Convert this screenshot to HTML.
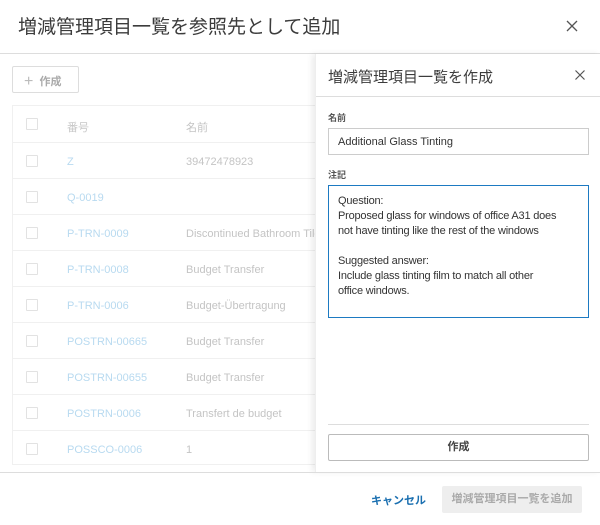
<!DOCTYPE html>
<html><head><meta charset="utf-8"><style>
*{box-sizing:border-box;margin:0;padding:0}
body{width:600px;height:525px;background:#fff;font-family:"Liberation Sans","Noto Sans CJK JP",sans-serif;position:relative;overflow:hidden;color:#333}
.abs{position:absolute}
.hdr{left:18px;top:12px;font-size:19px;color:#3c3c3c}
.row{position:absolute;left:12px;width:303px;height:36px;border-top:1px solid #f0f0f0}
.cb{position:absolute;left:14px;top:12px;width:12px;height:12px;border:1px solid #e2e2e2;border-radius:1px}
.num{position:absolute;left:55px;top:13px;font-size:11px;color:#b8daf0}
.nm{position:absolute;left:174px;top:13px;font-size:11px;color:#c4c4c4;white-space:nowrap}
</style></head><body>
<div class="abs hdr">増減管理項目一覧を参照先として追加</div>
<svg class="abs" style="left:566px;top:20px" width="12" height="12" viewBox="0 0 12 12"><path d="M1 1L11 11M11 1L1 11" stroke="#555" stroke-width="1.3"/></svg>
<div class="abs" style="left:0;top:53px;width:600px;height:1px;background:#ddd"></div>
<div class="abs" style="left:12px;top:66px;width:67px;height:27px;border:1px solid #ddd;border-radius:2px;font-size:11px;color:#aaa;font-weight:bold;padding:5px 0 0 11px"><span style="font-weight:normal;font-size:16px;color:#bbb;position:relative;top:1px">+</span>&nbsp; 作成</div>
<div class="abs" style="left:12px;top:105px;width:310px;height:360px;border:1px solid #f0f0f0"></div>
<div class="row" style="top:106px;border:none"><div class="cb"></div><div class="num" style="color:#c8c8c8;top:13px">番号</div><div class="nm" style="top:13px">名前</div></div>
<div class="row" style="top:142px"><div class="cb"></div><div class="num">Z</div><div class="nm">39472478923</div></div>
<div class="row" style="top:178px"><div class="cb"></div><div class="num">Q-0019</div></div>
<div class="row" style="top:214px"><div class="cb"></div><div class="num">P-TRN-0009</div><div class="nm">Discontinued Bathroom Tile</div></div>
<div class="row" style="top:250px"><div class="cb"></div><div class="num">P-TRN-0008</div><div class="nm">Budget Transfer</div></div>
<div class="row" style="top:286px"><div class="cb"></div><div class="num">P-TRN-0006</div><div class="nm">Budget-Übertragung</div></div>
<div class="row" style="top:322px"><div class="cb"></div><div class="num">POSTRN-00665</div><div class="nm">Budget Transfer</div></div>
<div class="row" style="top:358px"><div class="cb"></div><div class="num">POSTRN-00655</div><div class="nm">Budget Transfer</div></div>
<div class="row" style="top:394px"><div class="cb"></div><div class="num">POSTRN-0006</div><div class="nm">Transfert de budget</div></div>
<div class="row" style="top:430px"><div class="cb"></div><div class="num">POSSCO-0006</div><div class="nm">1</div></div>

<div class="abs" style="left:315px;top:54px;width:285px;height:418px;background:#fff;box-shadow:-3px 0 6px rgba(0,0,0,0.08);border-left:1px solid #eee">
 <div class="abs" style="left:12px;top:12px;font-size:15px;color:#3c3c3c">増減管理項目一覧を作成</div>
 <svg class="abs" style="left:259px;top:16px" width="10" height="10" viewBox="0 0 10 10"><path d="M0.5 0.5L9.5 9.5M9.5 0.5L0.5 9.5" stroke="#555" stroke-width="1.2"/></svg>
 <div class="abs" style="left:0;top:42px;width:285px;height:1px;background:#ddd"></div>
 <div class="abs" style="left:12px;top:57px;font-size:9px;font-weight:bold;color:#555">名前</div>
 <div class="abs" style="left:12px;top:74px;width:261px;height:27px;border:1px solid #ccc;font-size:11px;color:#333;padding:7px 0 0 9px">Additional Glass Tinting</div>
 <div class="abs" style="left:12px;top:114px;font-size:9px;font-weight:bold;color:#555">注記</div>
 <div class="abs" style="left:12px;top:131px;width:261px;height:133px;border:1px solid #1d7ac2;font-size:11px;color:#333;padding:8px 0 8px 9px;line-height:15px;white-space:nowrap;letter-spacing:-0.2px">Question:<br>Proposed glass for windows of office A31 does<br>not have tinting like the rest of the windows<br><br>Suggested answer:<br>Include glass tinting film to match all other<br>office windows.</div>
 <div class="abs" style="left:12px;top:370px;width:261px;height:1px;background:#ddd"></div>
 <div class="abs" style="left:12px;top:380px;width:261px;height:27px;border:1px solid #bbb;border-radius:2px;font-size:11px;font-weight:bold;color:#444;text-align:center;line-height:25px">作成</div>
</div>
<div class="abs" style="left:0;top:472px;width:600px;height:1px;background:#ddd"></div>
<div class="abs" style="left:371px;top:492px;font-size:11px;font-weight:bold;color:#1a6fb0">キャンセル</div>
<div class="abs" style="left:442px;top:486px;width:140px;height:27px;background:#eee;border-radius:2px;font-size:11px;font-weight:bold;color:#aaa;text-align:center;line-height:27px">増減管理項目一覧を追加</div>
</body></html>
